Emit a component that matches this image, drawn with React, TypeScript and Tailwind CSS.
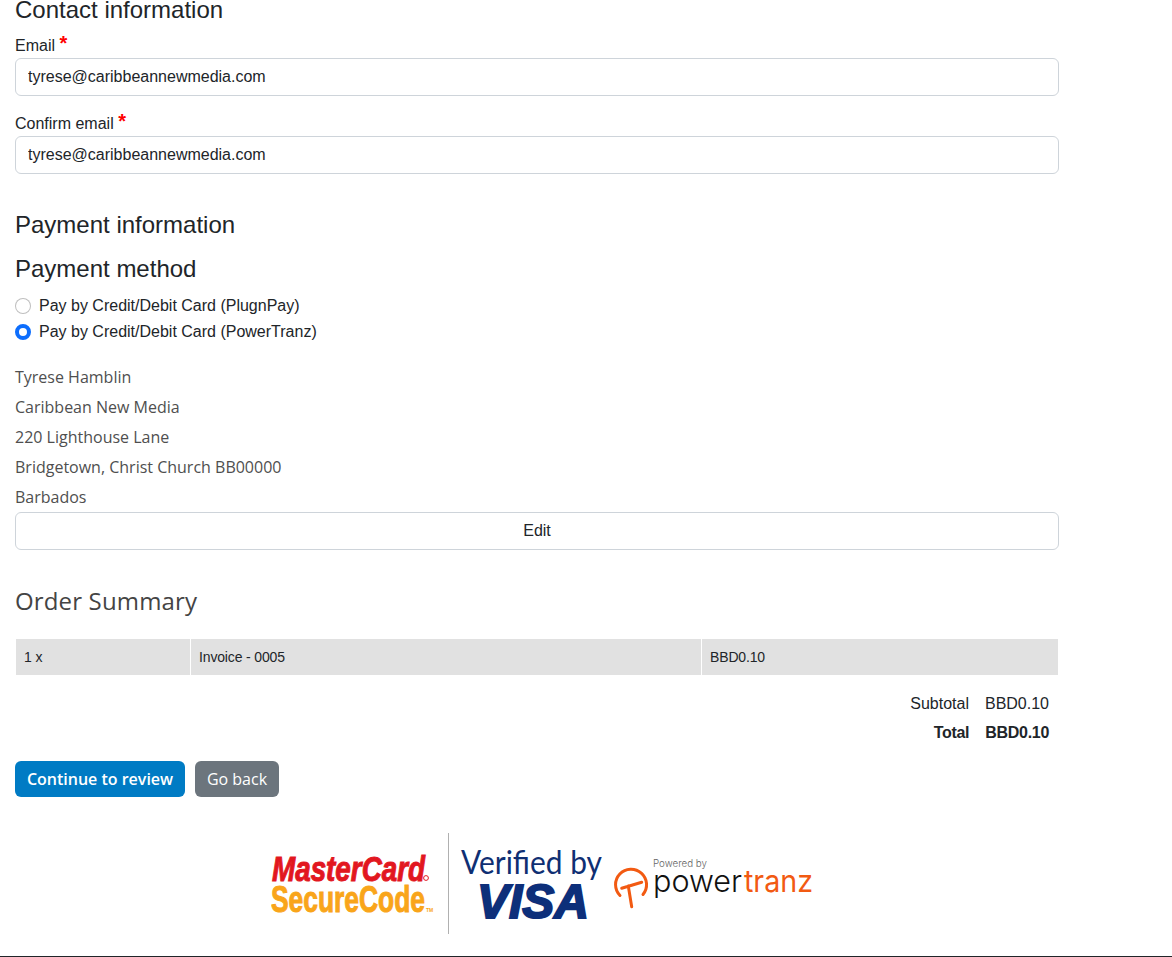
const sans = 'font-["Liberation_Sans",Arial,sans-serif]';

function Field({ label, value }: { label: string; value: string }) {
  return (
    <div className="mb-[15px]">
      <label className="block h-6 text-base leading-[26px] mb-px">
        {label} <span className="text-[#ff0000] text-[20px] leading-[0] font-bold align-[1px]">*</span>
      </label>
      <input
        readOnly
        value={value}
        className="block w-full h-[38px] px-3 py-1.5 text-base text-[#212529] bg-white border border-[#ced4da] rounded-md outline-none"
      />
    </div>
  );
}

function RadioRow({ label, checked }: { label: string; checked?: boolean }) {
  return (
    <label className="flex items-center h-[26px] text-base">
      <input
        type="radio"
        name="method"
        defaultChecked={checked}
        className={`appearance-none shrink-0 w-4 h-4 rounded-full mr-2 bg-white ${
          checked ? 'border-[4px] border-[#0d6efd]' : 'border border-black/25'
        }`}
      />
      {label}
    </label>
  );
}

// Logo strip: mastercard, verified by visa and powertranz sit in one image in the original
function PaymentLogos() {
  return (
    <svg width="544" height="102" viewBox="0 0 544 102" className="block">
      <text x="1" y="48" fontFamily="Liberation Sans" fontWeight="700" fontStyle="italic" fontSize="35" fill="#e2171f" stroke="#e2171f" strokeWidth="1" textLength="153" lengthAdjust="spacingAndGlyphs">
        MasterCard
      </text>
      <circle cx="155" cy="45" r="2.4" fill="none" stroke="#e2171f" strokeWidth="1" />
      <text x="0" y="79" fontFamily="Liberation Sans" fontWeight="700" fontSize="36" fill="#f9a51a" stroke="#f9a51a" strokeWidth="1" textLength="154" lengthAdjust="spacingAndGlyphs">
        SecureCode
      </text>
      <text x="155" y="79" fontFamily="Liberation Sans" fontWeight="700" fontSize="5" fill="#f9a51a">
        TM
      </text>
      <rect x="177" y="0" width="1" height="101" fill="#b0b0b0" />
      <text x="190" y="41" fontFamily="Lato" fontWeight="400" fontSize="32" fill="#0f2f73" textLength="141" lengthAdjust="spacingAndGlyphs">
        Verified by
      </text>
      <text x="206" y="85" fontFamily="Liberation Sans" fontWeight="700" fontStyle="italic" fontSize="48" fill="#0d2f7a" stroke="#0d2f7a" strokeWidth="2" textLength="112" lengthAdjust="spacingAndGlyphs">
        VISA
      </text>
      <text x="382" y="34" fontFamily="Inter" fontWeight="300" fontSize="10.5" fill="#666666" textLength="54" lengthAdjust="spacingAndGlyphs">
        Powered by
      </text>
      <path d="M349 62.5 A15.5 15.5 0 1 1 372 61.5" fill="none" stroke="#f25a12" strokeWidth="3" strokeLinecap="round" />
      <path d="M350.7 55.3 L370.7 49.3 M357.3 53 L360.7 73.7" fill="none" stroke="#f25a12" strokeWidth="3" strokeLinecap="round" />
      <text x="382" y="59" fontFamily="Inter" fontWeight="300" fontSize="31" fill="#111111" textLength="89" lengthAdjust="spacingAndGlyphs">
        power
      </text>
      <text x="473" y="59" fontFamily="Inter" fontWeight="400" fontSize="31" fill="#f25a12" textLength="69" lengthAdjust="spacingAndGlyphs">
        tranz
      </text>
    </svg>
  );
}

export default function App() {
  return (
    <div className={`${sans} h-[957px] overflow-hidden bg-white text-[#212529] border-b border-[#212529]`}>
      <div className="w-[1044px] ml-[15px] -mt-[5px]">
        <h4 className="text-2xl leading-[29px] mb-[9px]">Contact information</h4>
        <Field label="Email" value="tyrese@caribbeannewmedia.com" />
        <Field label="Confirm email" value="tyrese@caribbeannewmedia.com" />

        <h4 className="text-2xl leading-[29px] mt-9 mb-[15px]">Payment information</h4>
        <h4 className="text-2xl leading-[29px] mb-[10px]">Payment method</h4>
        <RadioRow label="Pay by Credit/Debit Card (PlugnPay)" />
        <RadioRow label="Pay by Credit/Debit Card (PowerTranz)" checked />

        <div className={`font-["Open_Sans",sans-serif] text-base leading-[30px] text-[#4f4f4f] mt-[17px]`}>
          <div>Tyrese Hamblin</div>
          <div>Caribbean New Media</div>
          <div>220 Lighthouse Lane</div>
          <div>Bridgetown, Christ Church BB00000</div>
          <div>Barbados</div>
        </div>
        <button className="block w-full h-[38px] text-base bg-white border border-[#ced4da] rounded-md">
          Edit
        </button>

        <h3 className={`font-["Open_Sans",sans-serif] font-medium tracking-[0.15px] text-2xl leading-[32px] text-[#444444] mt-[35px] mb-[22px]`}>
          Order Summary
        </h3>

        <div className="grid grid-cols-[174px_510px_356px] gap-x-px ml-px h-9 text-sm tracking-[-0.15px] items-stretch">
          <div className="flex items-center bg-[#e1e1e1] pl-2">1 x</div>
          <div className="flex items-center bg-[#e1e1e1] pl-2">Invoice - 0005</div>
          <div className="flex items-center bg-[#e1e1e1] pl-2">BBD0.10</div>
        </div>

        <div className="flex justify-end pr-[10px] mt-[14px] h-[29px] items-center text-base">
          <span className="mr-4">Subtotal</span>
          <span>BBD0.10</span>
        </div>
        <div className="flex justify-end pr-[10px] h-[29px] items-center text-base font-bold tracking-[-0.3px]">
          <span className="mr-4">Total</span>
          <span>BBD0.10</span>
        </div>

        <div className={`flex gap-[10px] mt-[14px] font-["Open_Sans",sans-serif] text-base text-white`}>
          <button className="w-[170px] h-9 bg-[#007bc4] rounded-md font-semibold">Continue to review</button>
          <button className="w-[84px] h-9 bg-[#6c757d] rounded-md">Go back</button>
        </div>

        <div className="ml-[256px] mt-9">
          <PaymentLogos />
        </div>
      </div>
    </div>
  );
}
